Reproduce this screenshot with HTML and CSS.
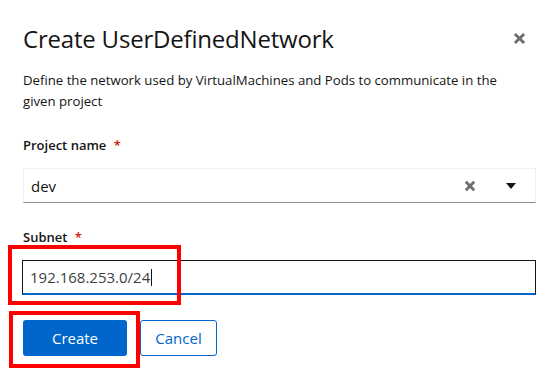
FILE: index.html
```html
<!DOCTYPE html>
<html lang="en">

<head>
    <meta charset="UTF-8" />
    <meta name="viewport" content="width=device-width, initial-scale=1.0" />
    <title>Create UserDefinedNetwork</title>
    <link rel="stylesheet" href="styles.css">
</head>

<body>
    <div class="modal">
        <div class="modal-header">
            <h1>Create UserDefinedNetwork</h1>
            <button class="close-btn" aria-label="Close">
                <svg viewBox="0 0 10 10">
                    <path d="M1.5 1.5 L8.5 8.5 M8.5 1.5 L1.5 8.5" />
                </svg>
            </button>
        </div>

        <p class="description">Define the network used by VirtualMachines and Pods to communicate in the given project</p>

        <div class="form-group">
            <label class="form-label">Project name <span class="required">*</span></label>
            <div class="select">
                <span class="select-value">dev</span>
                <span class="select-clear">
                    <svg viewBox="0 0 10 10">
                        <path d="M1.5 1.5 L8.5 8.5 M8.5 1.5 L1.5 8.5" />
                    </svg>
                </span>
                <span class="select-caret">
                    <svg viewBox="0 0 10 6">
                        <path d="M0 0 H10 L5 6 Z" />
                    </svg>
                </span>
            </div>
        </div>

        <div class="form-group">
            <label class="form-label">Subnet <span class="required">*</span></label>
            <div class="input-wrap">
                <div class="text-input">192.168.253.0/24<span class="cursor"></span></div>
                <div class="highlight highlight-input"></div>
            </div>
        </div>

        <div class="actions">
            <div class="btn-wrap">
                <button class="btn btn-primary">Create</button>
                <div class="highlight highlight-btn"></div>
            </div>
            <button class="btn btn-link">Cancel</button>
        </div>
    </div>
</body>

</html>
```

FILE: styles.css
```css
html,
body {
    margin: 0;
    padding: 0;
    background: white;
    font-family: 'Open Sans', 'Noto Sans', sans-serif;
    color: #151515;
}

.modal {
    width: 556px;
    min-height: 377px;
    padding: 23px 21px 0 23px;
    box-sizing: border-box;
}

.modal-header {
    display: flex;
    align-items: center;
    justify-content: space-between;
    height: 30px;
}

h1 {
    margin: 0;
    font-size: 24px;
    font-weight: 400;
    letter-spacing: -0.2px;
}

.close-btn {
    border: none;
    background: none;
    padding: 0;
    margin-right: 9px;
    width: 13px;
    height: 13px;
    display: flex;
}

.close-btn svg,
.select-clear svg {
    width: 100%;
    height: 100%;
    stroke: #6a6e73;
    stroke-width: 2.2;
    fill: none;
}

.description {
    margin: 17px 0 0;
    font-size: 13.2px;
    line-height: 21px;
    width: 490px;
}

.form-group {
    margin-top: 23px;
}

.form-group + .form-group {
    margin-top: 24px;
}

.form-label {
    display: block;
    font-size: 13px;
    font-weight: 600;
    line-height: 20px;
    margin-bottom: 13px;
}

.required {
    color: #c9190b;
    margin-left: 4px;
}

.select {
    display: flex;
    align-items: center;
    height: 35px;
    width: 513px;
    box-sizing: border-box;
    border: 1px solid #f0f0f0;
    border-bottom: 1px solid #8a8d90;
    padding: 0 0 0 7px;
}

.select-value {
    flex: 1;
    font-size: 15px;
}

.select-clear {
    width: 12px;
    height: 12px;
    display: flex;
    margin-right: 30px;
}

.select-clear svg {
    stroke-width: 2.4;
}

.select-caret {
    width: 10px;
    height: 6px;
    display: flex;
    margin-right: 19px;
}

.select-caret svg {
    width: 100%;
    height: 100%;
    fill: #151515;
}

.input-wrap {
    position: relative;
}

.text-input {
    display: flex;
    align-items: center;
    height: 35px;
    width: 514px;
    box-sizing: border-box;
    margin-left: -1px;
    border: 1px solid #151515;
    border-bottom: 2px solid #0066cc;
    padding: 0 0 0 7px;
    font-size: 15px;
    color: #3c3f42;
}

.cursor {
    display: inline-block;
    width: 1px;
    height: 17px;
    background: #151515;
    margin-left: 1px;
}

.actions {
    display: flex;
    gap: 13px;
    margin-top: 25px;
}

.btn-wrap {
    position: relative;
}

.btn {
    height: 36px;
    font-family: inherit;
    font-size: 15px;
    border-radius: 3px;
    cursor: pointer;
}

.btn-primary {
    width: 104px;
    background: #0066cc;
    color: white;
    border: none;
}

.btn-link {
    width: 77px;
    background: white;
    color: #0066cc;
    border: 1px solid #0066cc;
}

.highlight {
    position: absolute;
    border: 4px solid #ff0000;
    box-sizing: border-box;
}

.highlight-input {
    left: -15px;
    top: -15px;
    width: 173px;
    height: 60px;
}

.highlight-btn {
    left: -14px;
    top: -9px;
    width: 131px;
    height: 57px;
}
```
